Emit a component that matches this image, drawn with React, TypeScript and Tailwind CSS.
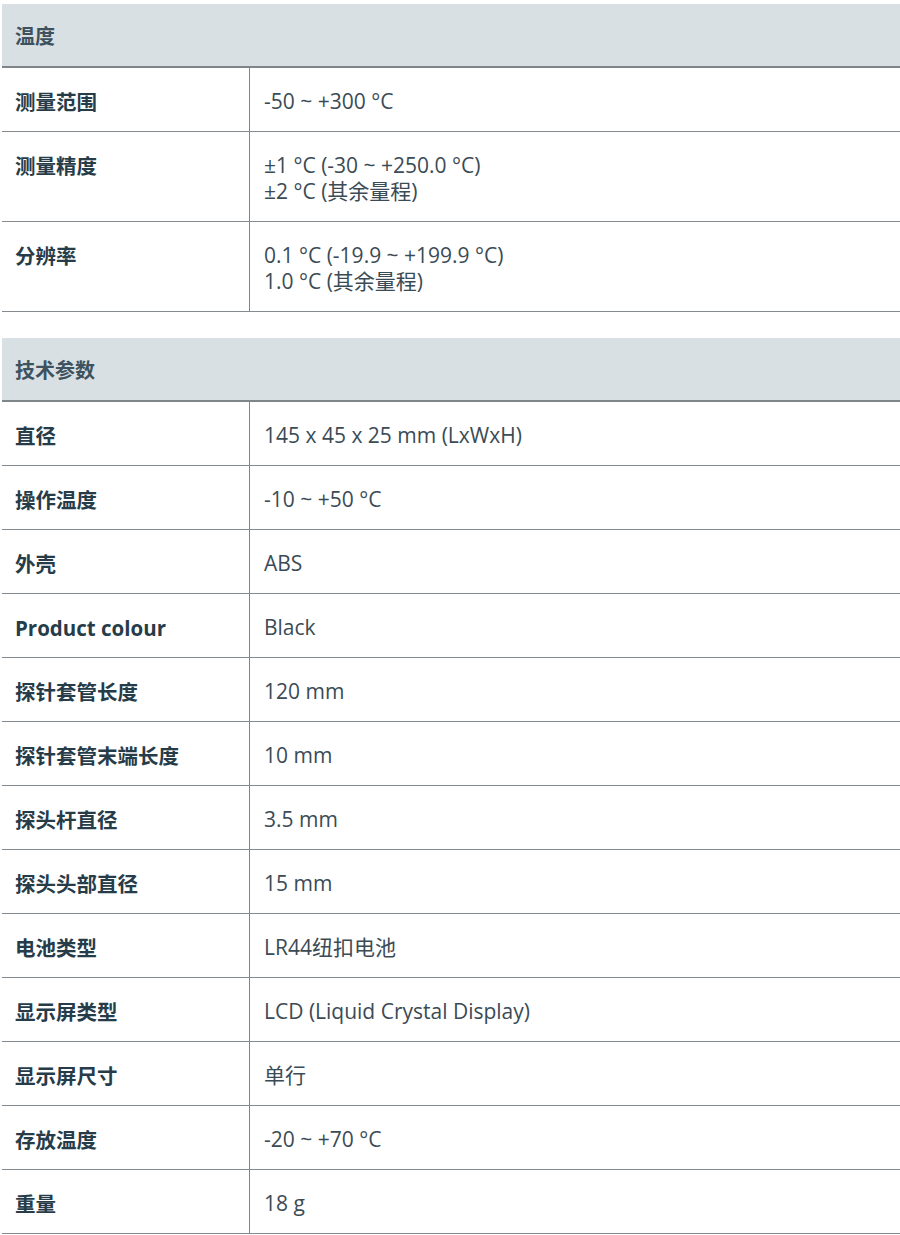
import React from "react";

type Row = { label: string; value: string[] };

const sections: { title: string; rows: Row[] }[] = [
  {
    title: "温度",
    rows: [
      { label: "测量范围", value: ["-50 ~ +300 °C"] },
      { label: "测量精度", value: ["±1 °C (-30 ~ +250.0 °C)", "±2 °C (其余量程)"] },
      { label: "分辨率", value: ["0.1 °C (-19.9 ~ +199.9 °C)", "1.0 °C (其余量程)"] },
    ],
  },
  {
    title: "技术参数",
    rows: [
      { label: "直径", value: ["145 x 45 x 25 mm (LxWxH)"] },
      { label: "操作温度", value: ["-10 ~ +50 °C"] },
      { label: "外壳", value: ["ABS"] },
      { label: "Product colour", value: ["Black"] },
      { label: "探针套管长度", value: ["120 mm"] },
      { label: "探针套管末端长度", value: ["10 mm"] },
      { label: "探头杆直径", value: ["3.5 mm"] },
      { label: "探头头部直径", value: ["15 mm"] },
      { label: "电池类型", value: ["LR44纽扣电池"] },
      { label: "显示屏类型", value: ["LCD (Liquid Crystal Display)"] },
      { label: "显示屏尺寸", value: ["单行"] },
      { label: "存放温度", value: ["-20 ~ +70 °C"] },
      { label: "重量", value: ["18 g"] },
    ],
  },
];

const font = { fontFamily: '"Open Sans", "Noto Sans CJK SC", sans-serif' };

export default function App() {
  return (
    <div className="bg-white w-[900px] pt-[4px] pl-[2px]" style={font}>
      {sections.map((s, i) => (
        <div key={s.title} className={i > 0 ? "mt-[26px]" : ""}>
          <div className="bg-[#d8e0e3] h-[64px] border-b-2 border-[#7f8689] flex items-center px-[13px] pt-[4px]">
            <span className="font-bold text-[20px] text-[#3d525e]">{s.title}</span>
          </div>
          {s.rows.map((r) => (
            <div key={r.label} className="flex border-b border-[#858b8e]">
              <div className="w-[248px] shrink-0 pl-[13px] pt-[21px] pb-[16px] border-r border-[#7f8689] font-bold text-[20.5px] leading-[26px] text-[#263c49]">
                {r.label}
              </div>
              <div className="pl-[14px] pt-[20px] pb-[17px] text-[21px] leading-[26px] text-[#3b4b55]">
                {r.value.map((v) => (
                  <div key={v}>{v}</div>
                ))}
              </div>
            </div>
          ))}
        </div>
      ))}
    </div>
  );
}
